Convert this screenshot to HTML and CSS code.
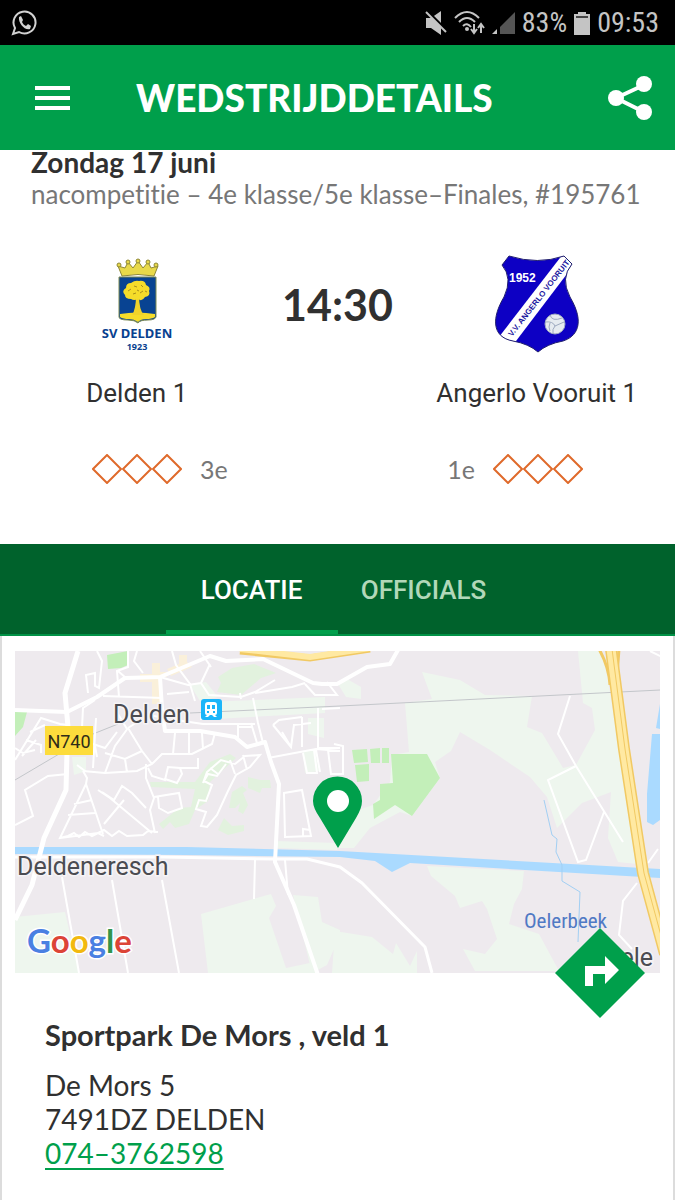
FILE: index.html
```html
<!DOCTYPE html>
<html lang="nl">
<head>
  <meta charset="UTF-8">
  <meta name="viewport" content="width=device-width, initial-scale=1.0">
  <title>Wedstrijddetails</title>
  <link rel="stylesheet" href="styles.css">
</head>
<body>
  <!-- Phone status bar -->
  <div class="status-bar">
    <svg class="status-app" width="26" height="26" viewBox="0 0 26 26" fill="none" stroke="#d2d2d2" stroke-width="2">
      <path d="M2 24l2-6a11 11 0 1 1 4 4z"/>
      <path d="M8 7l2-1 2 4-1 2c1 2 2 3 4 4l2-2 3 2-1 3c-5 2-12-6-11-12z" fill="#d2d2d2" stroke="none"/>
    </svg>
    <svg width="22" height="24" viewBox="0 0 22 24">
      <path d="M1 7h5l10-7v24l-10-7H1z" fill="#c4c4c4"/>
      <path d="M2 0l20 20" stroke="#000" stroke-width="3"/>
      <path d="M1 1l20 20" stroke="#c4c4c4" stroke-width="2"/>
    </svg>
    <svg class="status-wifi" width="31" height="24" viewBox="0 0 31 24" fill="none" stroke="#c4c4c4" stroke-width="2">
      <path d="M1 7q12-12 24 0M5 11q8-8 16 0M9 15q4-4 8 1"/>
      <circle cx="13" cy="18" r="2" fill="#c4c4c4" stroke="none"/>
      <path d="M20 13v8M17 18l3 4 3-4M27 22v-8M24 17l3-4 3 4"/>
    </svg>
    <svg width="23" height="24" viewBox="0 0 23 24">
      <path d="M23 1v22H8v-7z" fill="#555"/>
      <path d="M5 18v5H0z" fill="#c4c4c4"/>
    </svg>
    <span class="status-battery">83%</span>
    <svg width="16" height="24" viewBox="0 0 16 24">
      <path d="M4 1h8v2h4v21H0V3h4z" fill="#c4c4c4"/>
      <path d="M2 6h12" stroke="#444" stroke-width="2"/>
    </svg>
    <span>09:53</span>
  </div>

  <header class="app-bar">
    <button class="icon-button" aria-label="Menu">
      <svg width="35" height="26" viewBox="0 0 35 26" stroke="#fff" stroke-width="4">
        <path d="M0 3h35M0 13h35M0 23h35"/>
      </svg>
    </button>
    <h1>WEDSTRIJDDETAILS</h1>
    <button class="icon-button" aria-label="Delen">
      <svg width="44" height="44" viewBox="0 0 44 44" fill="#fff">
        <path d="M36 9L8 22l28 14" fill="none" stroke="#fff" stroke-width="4"/>
        <circle cx="8" cy="22" r="8"/>
        <circle cx="36" cy="8" r="8"/>
        <circle cx="36" cy="36" r="8"/>
      </svg>
    </button>
  </header>

  <main>
    <section class="match">
      <div class="match-info">
        <h2>Zondag 17 juni</h2>
        <p>nacompetitie – 4e klasse/5e klasse–Finales, #195761</p>
      </div>

      <div class="teams">
        <div class="team">
          <svg width="76" height="98" viewBox="0 0 76 98">
            <g fill="#e8d94a" stroke="#8d8736">
              <path d="M23 21l-4-10 7 2 3-6 5 6 5-7 5 7 5-6 3 6 7-2-4 10q-16-3-32 0z"/>
              <circle cx="20" cy="10" r="2"/><circle cx="29" cy="7" r="2"/><circle cx="39" cy="6" r="2"/><circle cx="49" cy="7" r="2"/><circle cx="57" cy="10" r="2"/>
            </g>
            <path d="M20 22h37v40q-1 3-8 3-8 0-10 3-3-3-10-3-9 0-9-3z" fill="#084392" stroke="#7c8a52"/>
            <path d="M21 59q17-3 35 0v3q-3 2-9 2-5 0-8 3-4-3-9-3-6 0-9-2z" fill="#f5dc2a"/>
            <path d="M37 40h3q0 15 5 20H33q4-6 4-20z" fill="#f0d32a"/>
            <path d="M32 44q-6 0-6-4-4-4 1-7 0-5 5-5 4-3 8-2 6-1 7 4 5 2 3 6 2 5-4 6-3 5-7 2-4 2-7 0z" fill="#f5dc2a"/>
            <path d="M29 36l3-2M35 31l3 1M42 30l2 2M34 39l3-1M41 38l3-2M46 36l2 1M38 35l2 1" stroke="#a98f1d"/>
            <text class="crest-name" x="38" y="83" text-anchor="middle">SV DELDEN</text>
            <text class="crest-year" x="38" y="95" text-anchor="middle">1923</text>
          </svg>
          <span class="team-name">Delden 1</span>
        </div>

        <div class="kickoff">14:30</div>

        <div class="team">
          <svg width="84" height="98" viewBox="0 0 84 98">
            <defs>
              <clipPath id="shield">
                <path d="M14 1q29 9 55 0l8 8q-12 14-2 33c16 27 6 40-7 44q-16 3-25 11-9-8-25-11C-4 82-3 62 9 42q9-19-2-32z"/>
              </clipPath>
            </defs>
            <g clip-path="url(#shield)">
              <path d="M0 0h84v98H0z" fill="#0d00c4"/>
              <path d="M68-1L4 82l14 8L81 7z" fill="#fff"/>
            </g>
            <path d="M14 1q29 9 55 0l8 8q-12 14-2 33c16 27 6 40-7 44q-16 3-25 11-9-8-25-11C-4 82-3 62 9 42q9-19-2-32z" fill="none" stroke="#22206e"/>
            <circle cx="60" cy="69" r="10" fill="#e6ebf0" stroke="#9eaac0"/>
            <path d="M50 67q8-1 10 4l9-4M60 71q-3 3-2 8M55 60q2 7 12 3M55 68q-2 4 0 8" fill="none" stroke="#9eaac0"/>
            <text class="shield-year" x="14" y="27">1952</text>
            <text class="shield-name" transform="translate(17 82) rotate(-52)">V.V. ANGERLO VOORUIT</text>
          </svg>
          <span class="team-name">Angerlo Vooruit 1</span>
        </div>
      </div>

      <div class="ranking">
        <div class="rank">
          <svg width="90" height="30" viewBox="0 0 90 30" fill="none" stroke="#df6a2b" stroke-width="2">
            <path d="M15 1l14 14-14 14L1 15zM45 1l14 14-14 14-14-14zM75 1l14 14-14 14-14-14z"/>
          </svg>
          <span>3e</span>
        </div>
        <div class="rank">
          <span>1e</span>
          <svg width="90" height="30" viewBox="0 0 90 30" fill="none" stroke="#df6a2b" stroke-width="2">
            <path d="M15 1l14 14-14 14L1 15zM45 1l14 14-14 14-14-14zM75 1l14 14-14 14-14-14z"/>
          </svg>
        </div>
      </div>
    </section>

    <nav class="tabs">
      <button class="tab active">LOCATIE</button>
      <button class="tab">OFFICIALS</button>
    </nav>

    <section class="location">
      <div class="map">
        <svg viewBox="15 651 645 322" role="img" aria-label="Kaart van Delden">
          <path d="M15 651h645v322H15z" fill="#eeeaee"/>

          <!-- fields and woods -->
          <g fill="#eef6ee">
            <path d="M405 703L432 699 422 672 460 680 485 695 532 696 527 727 542 733 563 768 576 765 595 730 592 708 583 703 578 651 602 651 608 680 637 864 618 862 608 838 611 792 582 803 557 828 547 797 530 777 490 750 460 732 451 751 435 762 440 778 412 816 400 812 370 828 354 848 337 848 352 812 373 805 390 782 392 755 409 752z"/>
            <path d="M427 866l97 5-2 18-8 15-5 20 30 10 20 37H475l-12-22 22 5 12-15-10-30-5-8-22 7-5-12-24-20z"/>
            <path d="M335 931l37 6 21 17 3-11 14 23 7-15v22h-85zM201 914l70-20 5 12-7 12 17 50 24-5 8 10H208zM293 895l25 2 4 25 18 8v5l-13 30-15 8z"/>
            <path d="M15 917l50-5 14 61H15z"/>
            <path d="M190 685l16-3 12 15-18 4zM205 702l120-5v16l-110 6zM308 718h16v20l-16-4zM303 751l12 0 4 20-14 2zM338 684l9-5 14 8v12l-15-2z"/>
            <path d="M275 841l62 2v7l-62-2zM72 757h14v14l-12 4z"/>
          </g>
          <g fill="#e2f2de">
            <path d="M150 782h45l15-20 20-8 6 4-26 24-2 19-13 9-6 14-14 4-5-6-7 7-4-5 20-16 12-1 4-18-44-2zM232 792l10-6 5 4-4 3 5 12-5 9-5-3 2-8-5 5-6 0zM248 777l12 3 10 0 1 8-9 0-2 5-12-5zM224 818l8 8 12-1 0 6-16 4-10-5z"/>
            <path d="M218 677l14-9 22-4 22 9-15 5-20 17-24-3 4-9z"/>
          </g>
          <g fill="#c3efb9">
            <path d="M107 655l21-4v14l-7 3-13 1zM15 712h12l-4 15-8 9zM352 750l15-1 1 13-14 1zM370 749l10-1v15h-9zM382 748l7 0v15h-7zM355 765l14-1v17l-12 1zM391 754h36l13 24-28 38-17-11-21 14-1-15 7-4v-16l13-1z"/>
          </g>
          <path d="M140 674h12v-11h8v9h7v5h-7v27h-8v-22h-12zM167 669l12-5v-9h8v7l5 5-21 9z" fill="#faf0da"/>

          <!-- canal, brook and pond -->
          <g fill="#aadaff">
            <path d="M15 847l172 0 153 4 320 18v9l-250-15-18 9-17-11-35-4-153-2-172-1z"/>
            <path d="M660 704v25l-4-1zM652 734l8 0v86l-7 5-6-3v-28z"/>
          </g>
          <path d="M544 800l8 35 5 4-1 13 6 13v16l18 11-2 50" fill="none" stroke="#a2cff3"/>

          <!-- railway -->
          <path d="M15 780l78-46 25-10M190 713l150-7 320-16" fill="none" stroke="#c3c6ca"/>

          <!-- side streets -->
          <g fill="none" stroke="#fff" stroke-width="2">
            <path d="M97 651l5 10-3 27-4-2v-13l-9 2 2 18M119 697l-2-26 11-4 0-16M126 678l-8-7M103 696l60 2M137 651l-3 10 9 12M172 651l4 14 14 19 5 17M200 651l11 16M210 664l-9 19-13 2-14-4-14-4M201 683l8 12 32 2 14-5 20-12M189 692l-22 2M253 698l5 25 5 20M241 699l-1-6M305 683l-13 4-37 6M305 684l10 11 22 0-10-13M203 702l-2 18M255 724l-52 0-27-4M238 723v17M251 723l6 20M238 727l14 0"/>
            <path d="M15 760l26-42 19 6 8 1M22 756l14-16M26 740l15 5 0 8M15 748l8 5 12-3M30 732l15-7M95 700l-12 8-1 20M96 718l-3 50M128 728l-13 18-10 27M128 728l14 23 10 13M115 756l10 3 17-8M125 759l2 13M115 756l-10-3M83 771l22 2 32-2 15-7 10-10h30l20-10 3-11M175 733l-2 21M189 733v21M202 733l1 16M93 744l12 4 12-16M97 757l-2-11M85 771l-8-6M128 728l20-13 12 2M115 709l12 20"/>
            <path d="M148 768l4 8 13 4 3-13 12 1 2 6-5 9-12-4M180 768l18 0V758M146 764l0 14 8 20-4 12 5 23M154 797l25-4 3 15-14 5-9-5-1-11M86 784l-26 54 38-5 6 3M86 784l17 50M98 790l12 8 42 35M102 792l12 8 8-14 10 7 14 15M124 800l-20 24M74 804l18-4M68 815l27-2M60 838l8-2 6-3 5 4 6-5 7 4 12-6 8 6 7-5 8 5 16-1 5-4 10 1M83 771l4 7-1 6M68 774l-20 2-23 14 8 26-18 9"/>
            <path d="M203 783l4-11 14-12 14 4 10-8 15-1-10 12-14 8-8 16-11 24-10 12-6-1 5-14-10-3 3-9 7 1 6-16-8-4 4-7 9 2 9-12M210 768l8 6M230 760l5 14M243 755l4 15M268 758l48-9 24 2M273 725l18 22 3-22 17-2M273 725l6-5 23-3M291 747l-9-15M302 717v30M318 708v40l22 0M322 709l18-1M303 753l4 20h10l-3-23M328 750l3 24h12v-28l-9-2M320 772l-4-22"/>
            <path d="M284 793l18-3 9 46-26 1zM303 836v-7l7 1"/>
            <path d="M255 860l-1 39M285 860l3 35M62 877l17 96M112 880l16 93M162 880l17 93"/>
            <path d="M570 696l-12 38 18 32 47 76M576 766l-28 14 30 82 8-2 18-48M658 849l-10 14M637 883l-14 18-4 34 13 14M650 651l12 6"/>
          </g>

          <!-- main roads -->
          <g fill="none" stroke="#fff" stroke-width="5" stroke-linejoin="round">
            <path d="M78 651l-13 42 3 34-1 25-1 38-22 48-12 47-17 35"/>
            <path d="M15 710l52 2 30-15 28-19 35-1 50-21 16 5 37-2 50 24 9 1h15l30-17 23-3 8-14" stroke-width="4"/>
            <path d="M160 677l2 32 3 22 35 0 35 6 12 10 18-5 6 20 8 22-4 78 19 43 24 70" stroke-width="4"/>
            <path d="M15 857l148 0 110 2h34l33 8 22 16 63 64 7 26" stroke-width="3"/>
          </g>

          <!-- highways -->
          <path d="M240 651l70 7 60-9" fill="none" stroke="#f1c963" stroke-width="7"/>
          <path d="M240 649l70 8 60-9" fill="none" stroke="#ffe9a2" stroke-width="6"/>
          <g fill="none" stroke-linejoin="round">
            <path d="M599 649q10 18 11 36M619 649l-3 40" stroke="#f1c963" stroke-width="3"/>
            <path d="M611 649l13 100 19 124 22 81" stroke="#f1c963" stroke-width="12"/>
            <path d="M611 649l13 100 19 124 22 81" stroke="#ffe9a2" stroke-width="9"/>
            <path d="M612 649l13 100 19 124 22 81" stroke="#f1c963"/>
          </g>

          <!-- labels -->
          <rect x="45" y="726" width="48" height="29" fill="#fddc3c"/>
          <text class="road-label" x="69" y="748" text-anchor="middle">N740</text>
          <text class="place-label" x="113" y="723">Delden</text>
          <text class="place-label" x="17" y="875">Deldeneresch</text>
          <text class="water-label" x="524" y="928">Oelerbeek</text>
          <text class="place-label" x="653" y="966" text-anchor="end">ele</text>

          <!-- train station -->
          <rect x="201" y="699" width="21" height="21" rx="3" fill="#1cb5f9"/>
          <path d="M208 702h6q3 0 3 3v8q0 2-2 2l2 2h-3l-2-2h-2l-2 2h-3l2-2q-2 0-2-2v-8q0-3 3-3z" fill="#fff"/>
          <path d="M207 705h3v4h-3zM212 705h3v4h-3zM207 711h2v2h-2zM213 711h2v2h-2z" fill="#1cb5f9"/>

          <text class="google" x="27" y="953"><tspan fill="#4a80e2">G</tspan><tspan fill="#dc4437">o</tspan><tspan fill="#f2b90f">o</tspan><tspan fill="#4a80e2">g</tspan><tspan fill="#32944b">l</tspan><tspan fill="#dc4437">e</tspan></text>

          <path d="M338 848l-18-30q-7-10-7-17a24 24 0 0 1 49 0q0 7-6 17z" fill="#009f4b"/>
          <circle cx="338" cy="801" r="11" fill="#fff"/>
        </svg>
        <a class="directions" href="#route" aria-label="Route">
          <svg width="90" height="90" viewBox="0 0 90 90">
            <path d="M45 0l45 45-45 45L0 45z" fill="#009f4b"/>
            <path d="M30 58V38h20V28l14 14-14 14V46H38v12z" fill="#fff"/>
          </svg>
        </a>
      </div>

      <address class="address">
        <h3>Sportpark De Mors , veld 1</h3>
        <p>De Mors 5</p>
        <p>7491DZ DELDEN</p>
        <p><a href="tel:0743762598">074–3762598</a></p>
      </address>
    </section>
  </main>
</body>
</html>
```

FILE: styles.css
```css
* {
  box-sizing: border-box;
}
body {
  margin: 0;
  min-height: 100vh;
  display: flex;
  flex-direction: column;
  font-family: Lato, sans-serif;
  font-variant-ligatures: none;
  color: #303030;
  background-color: #fff;
}
h1, h2, h3, p {
  margin: 0;
}
svg {
  display: block;
}
button {
  border: none;
  padding: 0;
  background: none;
  cursor: pointer;
}
.status-bar {
  display: flex;
  align-items: center;
  gap: 7px;
  height: 45px;
  padding: 0 16px 0 11px;
  background-color: #000;
  color: #c4c4c4;
  font-family: "Roboto Condensed", Roboto, sans-serif;
  font-size: 28px;
}
.status-app {
  margin-right: auto;
}
.app-bar {
  display: flex;
  align-items: center;
  height: 105px;
  padding: 0 23px 0 35px;
  background-color: #009f4b;
  color: #fff;
}
.app-bar h1 {
  flex: 1;
  padding-left: 66px;
  font-size: 37px;
  font-weight: 900;
}
main {
  display: flex;
  flex-direction: column;
  flex: 1;
}
.match-info {
  padding: 0 31px;
}
.match-info h2 {
  font-size: 28px;
  line-height: 24px;
}
.match-info p {
  font-size: 26px;
  line-height: 40px;
  color: #777;
  white-space: nowrap;
}
.teams {
  display: grid;
  grid-template-columns: 1fr 128px 1fr;
  margin-top: 41px;
}
.team {
  display: flex;
  flex-direction: column;
  align-items: center;
  gap: 25px;
}
.team:last-child {
  padding-right: 3px;
}
.team-name {
  font-family: Roboto, sans-serif;
  font-size: 26px;
  line-height: 30px;
}
.kickoff {
  font-size: 43px;
  font-weight: 700;
  line-height: 100px;
  text-align: center;
}
.crest-name {
  font-family: "Noto Sans", sans-serif;
  font-size: 13px;
  font-weight: 700;
  fill: #08418f;
}
.crest-year {
  font-family: "Noto Sans", sans-serif;
  font-size: 9px;
  font-weight: 700;
  fill: #08418f;
}
.shield-year {
  font-family: "Liberation Sans", sans-serif;
  font-size: 12px;
  font-weight: 700;
  fill: #fff;
}
.shield-name {
  font-family: "Liberation Sans", sans-serif;
  font-size: 8px;
  font-weight: 700;
  fill: #1a159e;
}
.ranking {
  display: flex;
  justify-content: space-between;
  padding: 46px 92px 60px;
}
.rank {
  display: flex;
  align-items: center;
  gap: 18px;
  font-size: 25px;
  line-height: 30px;
  color: #777;
}
.tabs {
  display: flex;
  justify-content: center;
  height: 92px;
  background-color: #00622c;
  border-bottom: 2px solid #009246;
}
.tab {
  width: 172px;
  padding-top: 6px;
  border-bottom: 4px solid transparent;
  font-family: Roboto, sans-serif;
  font-size: 26px;
  font-weight: 500;
  color: #b2d8b9;
}
.tab.active {
  color: #fff;
  border-bottom-color: #009f4b;
}
.location {
  flex: 1;
  padding: 15px 13px 20px;
  border: solid #dcdcdc;
  border-width: 0 2px;
}
.map {
  position: relative;
}
.map > svg {
  width: 100%;
  height: auto;
}
.place-label, .road-label {
  font-family: Roboto, sans-serif;
}
.place-label {
  font-size: 25px;
  fill: #4b4c52;
  stroke: #f6f4f6;
  stroke-width: 3px;
  paint-order: stroke;
}
.road-label {
  font-size: 18px;
  fill: #302c18;
}
.water-label {
  font-family: "Roboto Condensed", Roboto, sans-serif;
  font-size: 21px;
  fill: #5079c4;
}
.google {
  font-family: Lato, sans-serif;
  font-size: 33px;
  font-weight: 700;
  stroke: #fff;
  stroke-width: 3px;
  paint-order: stroke;
}
.directions {
  position: absolute;
  right: 15px;
  bottom: -45px;
}
.address {
  padding: 45px 30px 0;
  font-size: 28px;
  font-style: normal;
  line-height: 34px;
}
.address h3 {
  margin-bottom: 16px;
  font-size: 29px;
}
.address a {
  color: #009f4b;
  text-decoration-thickness: 2px;
  text-underline-offset: 4px;
}
```
